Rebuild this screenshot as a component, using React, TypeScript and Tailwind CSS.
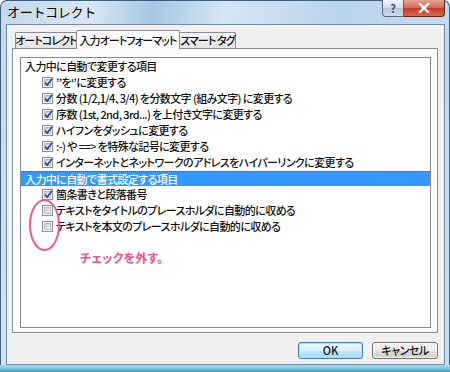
import React from "react";

const font = "font-['Noto_Sans_CJK_JP','Noto_Sans',sans-serif]";

const autoItems = [
  { label: "’’を‘’に変更する", checked: true },
  { label: "分数 (1/2,1/4、3/4) を分数文字 (組み文字) に変更する", checked: true },
  { label: "序数 (1st, 2nd, 3rd...) を上付き文字に変更する", checked: true },
  { label: "ハイフンをダッシュに変更する", checked: true },
  { label: ":-) や ==> を特殊な記号に変更する", checked: true },
  { label: "インターネットとネットワークのアドレスをハイパーリンクに変更する", checked: true },
];

const formatItems = [
  { label: "箇条書きと段落番号", checked: true },
  { label: "テキストをタイトルのプレースホルダに自動的に収める", checked: false },
  { label: "テキストを本文のプレースホルダに自動的に収める", checked: false },
];

function CheckBox({ checked }: { checked: boolean }) {
  return (
    <div className="w-[11px] h-[11px] border border-[#8e8f8f] bg-white p-[1px] shrink-0 relative">
      <div className="w-full h-full bg-[linear-gradient(135deg,#cbcbcb,#f4f4f4)] border border-[#b9b9b9]" />
      {checked && (
        <svg className="absolute left-[0px] top-[-1px]" width="11" height="11" viewBox="0 0 11 11">
          <path d="M2 5.5 L4.3 8 L9 1.8" fill="none" stroke="#2a4fa0" strokeWidth="1.8" />
        </svg>
      )}
    </div>
  );
}

function Row({ label, checked }: { label: string; checked: boolean }) {
  return (
    <div className="h-[16px] flex items-center pl-[21px] gap-[3px]">
      <CheckBox checked={checked} />
      <span className="text-[11px] leading-[16px] text-[#111] font-medium whitespace-nowrap tracking-[-0.6px] [font-feature-settings:'palt']">
        {label}
      </span>
    </div>
  );
}

export default function App() {
  return (
    <div className={`w-[450px] h-[372px] relative overflow-hidden rounded-t-[7px] flex flex-col bg-[linear-gradient(100deg,#c4d8e9_0%,#d9e6f1_18%,#a6c7e3_30%,#d5e5f2_44%,#bad4ea_66%,#c7deee_100%)] shadow-[inset_0_0_0_1px_#3d5f80] ${font}`}>
      {/* title bar */}
      <div className="h-[24px] flex items-start justify-between shrink-0">
        <span className="pl-[7px] pt-[4px] text-[13px] leading-[16px] text-black tracking-[-0.3px]">
          オートコレクト
        </span>
        <div className="flex mr-[5px]">
          <div className="w-[22px] h-[17px] rounded-bl-[4px] border border-t-0 border-[#56677c] bg-[linear-gradient(#eef3f8,#d2dde8_50%,#b7c6d6_51%,#cfdae6)] flex items-center justify-center text-[11px] font-bold text-[#3c4a5a] leading-none">
            ?
          </div>
          <div className="w-[41px] h-[17px] rounded-br-[4px] border border-t-0 border-l-0 border-[#5a2418] bg-[linear-gradient(#e9a595,#d56a54_50%,#c23d23_51%,#d7674e)] flex items-center justify-center">
            <svg width="12" height="10" viewBox="0 0 12 10">
              <path d="M2 1 L10 9 M10 1 L2 9" stroke="#ffffff" strokeWidth="2.4" strokeLinecap="square" />
            </svg>
          </div>
        </div>
      </div>

      {/* client area */}
      <div className="ml-[6px] mr-[5px] h-[341px] shrink-0 bg-[#f0f0f0] border border-[#6f8ba6] flex flex-col px-[5px] pt-[5px]">
        {/* tabs */}
        <div className="h-[18px] flex items-end pl-[3px] text-[11px] leading-none text-[#111] font-medium whitespace-nowrap [font-feature-settings:'palt'] tracking-[-0.9px]">
          <div className="h-[16px] w-[62px] border border-b-0 border-[#898c95] rounded-t-[2px] bg-[linear-gradient(#f4f4f4,#e4e4e4)] flex items-center justify-center">
            オートコレクト
          </div>
          <div className="h-[19px] w-[104px] -ml-[1px] border border-b-0 border-[#898c95] rounded-t-[2px] bg-[#fcfcfc] flex items-center justify-center relative z-10 mb-[-1px]">
            入力オートフォーマット
          </div>
          <div className="h-[16px] w-[57px] -ml-[1px] border border-b-0 border-[#898c95] rounded-t-[2px] bg-[linear-gradient(#f4f4f4,#e4e4e4)] flex items-center justify-center">
            スマート タグ
          </div>
        </div>

        {/* tab panel */}
        <div className="w-[426px] h-[285px] border border-[#898c95] bg-[#fcfcfc] pt-[8px] pl-[7px]">
          <div className="w-[411px] h-[271px] border border-[#828790] bg-white relative">
            <div className="h-[16px] pl-[4px] text-[11px] leading-[16px] text-[#111] font-medium tracking-[-0.6px] [font-feature-settings:'palt']">
              入力中に自動で変更する項目
            </div>
            {autoItems.map((item, i) => (
              <Row key={i} label={item.label} checked={item.checked} />
            ))}
            <div className="h-[15px] mt-[1px] pl-[4px] text-[11px] leading-[14px] text-white font-medium bg-[#3399ff] border-t border-dotted border-[#a8343a] tracking-[-0.6px] [font-feature-settings:'palt']">
              入力中に自動で書式設定する項目
            </div>
            {formatItems.map((item, i) => (
              <Row key={i} label={item.label} checked={item.checked} />
            ))}
            <div className="pl-[59px] pt-[17px] text-[12px] leading-[14px] font-bold text-[#ef4f8b] tracking-[0.2px] [font-feature-settings:'palt']">
              チェックを外す。
            </div>
            {/* annotation ring */}
            <div className="absolute left-[8px] top-[141px] w-[31px] h-[52px] rounded-[50%] border-[2px] border-[#f0568f]" />
          </div>
        </div>

        {/* buttons */}
        <div className="mt-[9px] w-[426px] flex justify-end gap-[9px] text-[11px] leading-none text-[#111] font-medium">
          <div className="w-[65px] h-[17px] rounded-[3px] border border-[#3c7fb1] bg-[linear-gradient(#eaf6fd,#d9f0fc_50%,#bee6fd_51%,#a7d9f5)] shadow-[inset_0_0_0_1px_#a9e1fb] flex items-center justify-center">
            OK
          </div>
          <div className="w-[66px] h-[17px] rounded-[3px] border border-[#707070] bg-[linear-gradient(#f2f2f2,#ebebeb_50%,#dddddd_51%,#cfcfcf)] shadow-[inset_0_0_0_1px_#fbfbfb] flex items-center justify-center [font-feature-settings:'palt'] tracking-[-0.5px]">
            キャンセル
          </div>
        </div>
      </div>

      {/* bottom frame */}
      <div className="flex-1 bg-[linear-gradient(#b7d3e8,#6fc8dc_60%,#3f8fae)]" />
    </div>
  );
}
